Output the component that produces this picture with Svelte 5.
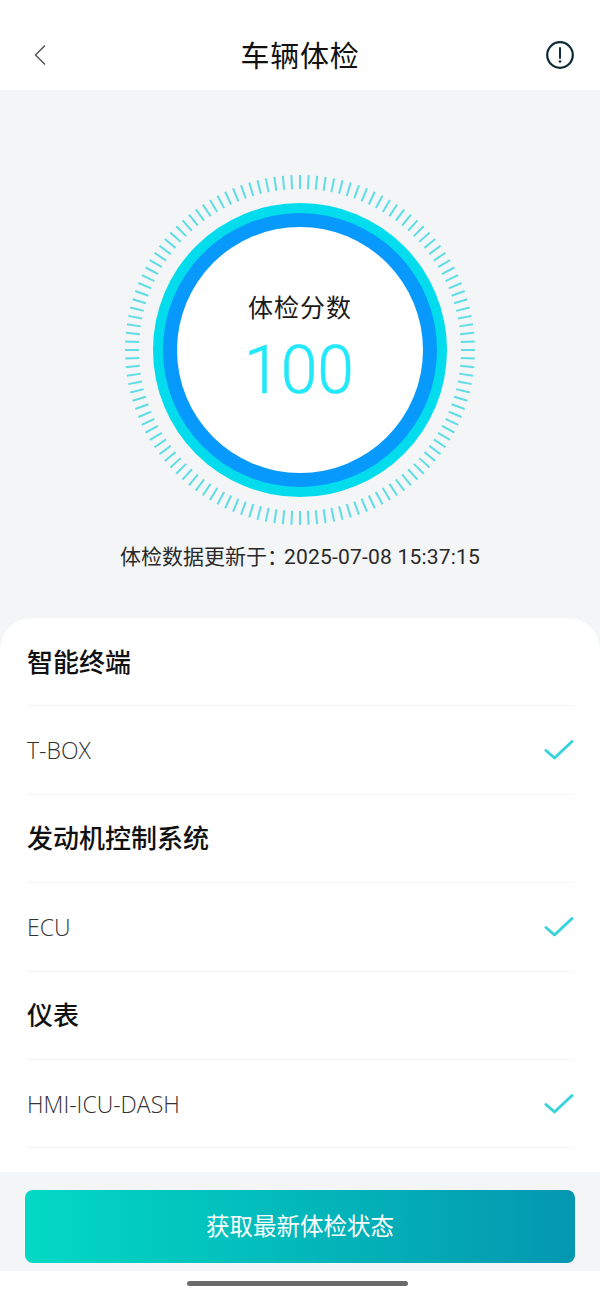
<script>
	const ticks = Array.from({ length: 128 }, (_, i) => i * (360 / 128));
	const sections = [
		{ title: '智能终端', item: 'T-BOX' },
		{ title: '发动机控制系统', item: 'ECU' },
		{ title: '仪表', item: 'HMI-ICU-DASH' }
	];
</script>

<div class="page">
	<header class="topbar">
		<svg class="back" width="30" height="24" viewBox="0 0 30 24">
			<path d="M20 2.500 L10.500 12 L20 21.500" fill="none" stroke="#555" stroke-width="1.500" />
		</svg>
		<h1>车辆体检</h1>
		<svg class="info" width="30" height="30" viewBox="0 0 30 30">
			<circle cx="15" cy="15" r="12.800" fill="none" stroke="#0f2a33" stroke-width="2.200" />
			<path d="M15 8 V18" stroke="#0f2a33" stroke-width="2" stroke-linecap="round" />
			<circle cx="15" cy="21.500" r="1.300" fill="#0f2a33" />
		</svg>
	</header>

	<section class="score">
		<div class="gauge">
			<svg width="352" height="352" viewBox="0 0 352 352">
				{#each ticks as a}
					<line x1="176" y1="1" x2="176" y2="15" transform="rotate({a} 176 176)" />
				{/each}
			</svg>
			<div class="ring-outer">
				<div class="ring-inner">
					<div class="dial">
						<span class="dial-label">体检分数</span>
						<span class="dial-value">100</span>
					</div>
				</div>
			</div>
		</div>
		<p class="updated">体检数据更新于：<span>2025-07-08 15:37:15</span></p>
	</section>

	<section class="card">
		{#each sections as s}
			<div class="row title">{s.title}</div>
			<div class="row">
				<span class="name">{s.item}</span>
				<svg width="30" height="22" viewBox="0 0 30 22">
					<path d="M2 11.500 L10.500 19 L28 2.500" fill="none" stroke="#38d3dc" stroke-width="3" stroke-linecap="round" stroke-linejoin="round" />
				</svg>
			</div>
		{/each}
	</section>

	<div class="footer">
		<button type="button">获取最新体检状态</button>
	</div>

	<div class="home"><span></span></div>
</div>

<style>
	:global(body) { background: #fff; }
	.page {
		width: 600px; height: 1295px; overflow: hidden;
		display: flex; flex-direction: column;
		background: #f3f5f7;
		font-family: "Noto Sans CJK SC", "Noto Sans", sans-serif;
	}

	.topbar {
		height: 90px; flex: none; box-sizing: border-box;
		background: #fff; padding: 20px 25px 0 25px;
		display: flex; align-items: center; justify-content: space-between;
	}
	.topbar h1 { margin: -3px 0 0; font-size: 29px; font-weight: 400; color: #111; line-height: 40px; letter-spacing: 0.7px; }

	.score { height: 528px; flex: none; display: flex; flex-direction: column; align-items: center; }
	.gauge {
		position: relative; width: 352px; height: 352px; margin-top: 84px;
		display: flex; align-items: center; justify-content: center;
	}
	.gauge svg { position: absolute; inset: 0; }
	.gauge line { stroke: #5fdde6; stroke-width: 2; }
	.ring-outer {
		width: 294px; height: 294px; border-radius: 50%; background: #02dcec;
		display: flex; align-items: center; justify-content: center;
	}
	.ring-inner {
		width: 274px; height: 274px; border-radius: 50%; background: #0799fc;
		display: flex; align-items: center; justify-content: center;
	}
	.dial {
		width: 246px; height: 246px; border-radius: 50%; background: #fff;
		display: flex; flex-direction: column; align-items: center;
	}
	.dial-label { margin-top: 61px; font-size: 25px; line-height: 36px; color: #1a1a1a; letter-spacing: 1px; }
	.dial-value { font-family: Roboto, "Noto Sans", sans-serif; font-weight: 300; font-size: 66px; line-height: 76px; margin: 9px 2px 0 0; color: #22e8fa; -webkit-text-stroke: 0.5px #22e8fa; }
	.updated { margin: 17px 0 0; font-family: Roboto, "Noto Sans CJK SC", sans-serif; font-size: 21px; line-height: 28px; color: #2a2a2a; }
	.updated span { letter-spacing: 0.2px; margin-left: -4px; }

	.card {
		height: 554px; flex: none; box-sizing: border-box;
		background: #fff; border-radius: 32px 32px 0 0; padding: 0 26px 0 27px;
	}
	.row {
		height: 88.400px; box-sizing: border-box; border-bottom: 1px solid #f3f4f5;
		display: flex; align-items: center; justify-content: space-between;
	}
	.row.title { font-size: 26px; font-weight: 500; color: #111; padding-bottom: 3px; }
	.name { font-family: "Open Sans", "Noto Sans", sans-serif; font-weight: 300; font-size: 23px; color: #333; }

	.footer { height: 99px; flex: none; box-sizing: border-box; padding: 18px 25px 8px; }
	.footer button {
		display: block; width: 100%; height: 73px; border: none; border-radius: 8px;
		background: linear-gradient(90deg, #02d9c5, #0497b0);
		color: #fff; font: inherit; font-size: 23.500px; padding: 0 0 3px;
	}

	.home { flex: 1; background: #fff; display: flex; justify-content: center; padding-top: 10px; }
	.home span { width: 221px; height: 5px; border-radius: 3px; background: #6b6b6b; margin-left: -5px; }
</style>
